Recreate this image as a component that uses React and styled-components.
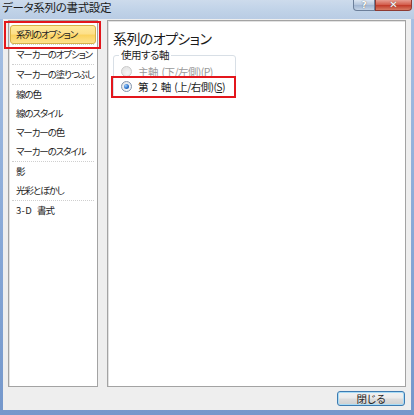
import React from 'react';
import styled, { createGlobalStyle } from 'styled-components';

const Global = createGlobalStyle`
  html, body { margin: 0; padding: 0; background: #fff; }
  body { font-family: "Noto Sans CJK JP", "Noto Sans", sans-serif; }
`;

const Window = styled.div`
  position: relative;
  width: 414px;
  height: 415px;
  display: flex;
  flex-direction: column;
  background: linear-gradient(180deg, #a9c2e4 0%, #86a7d6 60%, #7497cb 100%);
  font-family: "Noto Sans CJK JP", sans-serif;
  font-feature-settings: "palt" 1;
  color: #000;
  overflow: hidden;
`;

const TitleBar = styled.div`
  height: 19px;
  flex: none;
  display: flex;
  justify-content: space-between;
  align-items: flex-start;
  padding: 0 2px 0 2px;
  background: linear-gradient(180deg, #cddbec 0%, #c1d3e8 50%, #b9cce4 100%);
`;

const Title = styled.div`
  font-size: 11.5px;
  line-height: 15px;
  letter-spacing: -0.3px;
  color: #1a1a1a;
`;

const Controls = styled.div`
  display: flex;
`;

const CapButton = styled.div`
  height: 11px;
  width: ${p => p.$w}px;
  box-sizing: border-box;
  border: 1px solid ${p => (p.$close ? '#8e3a32' : '#6c7f9a')};
  border-top: none;
  border-radius: ${p => (p.$close ? '0 0 4px 0' : '0 0 0 4px')};
  background: ${p =>
    p.$close
      ? 'linear-gradient(180deg, #e79e92 0%, #d4604f 45%, #c23d2b 55%, #d77a62 100%)'
      : 'linear-gradient(180deg, #dbe5f1 0%, #b7c8de 45%, #a3b7d2 55%, #c3d3e6 100%)'};
  display: flex;
  align-items: center;
  justify-content: center;
  color: #fff;
  font-family: "DejaVu Sans", sans-serif;
  font-weight: bold;
  font-size: ${p => (p.$close ? 10 : 9)}px;
  line-height: 10px;
  text-shadow: 0 0 1px #444;
`;

const Client = styled.div`
  flex: 1;
  margin: 0 3px 5px 3px;
  background: #eeeeee;
  padding: 1px 5px 4px 5px;
  display: flex;
  flex-direction: column;
  min-height: 0;
`;

const Panels = styled.div`
  flex: 1;
  display: flex;
  gap: 9px;
  min-height: 0;
`;

const List = styled.div`
  width: 90px;
  box-sizing: border-box;
  border: 1px solid #a3a3a3;
  box-shadow: inset 1px 1px 0 #e2e2e2;
  background: #fff;
  padding: 4px 1px;
  display: flex;
  flex-direction: column;
`;

const Item = styled.div`
  height: 19px;
  line-height: 19px;
  box-sizing: border-box;
  padding-left: ${p => (p.$selected ? 5 : 6)}px;
  font-size: 9.5px;
  letter-spacing: -1.1px;
  word-spacing: 4px;
  white-space: nowrap;
  color: #1e1e1e;
  border-radius: 3px;
  ${p =>
    p.$selected &&
    `
    border: 1px solid #d6b149;
    line-height: 17px;
    background: linear-gradient(180deg, #ffeb9d 0%, #fde08a 45%, #fbd35f 55%, #fde28d 100%);
  `}
`;

const Latin = styled.span`
  letter-spacing: 0.3px;
`;

const Separator = styled.div`
  height: 0;
  margin: 0 2px;
  border-top: 1px dotted #cfcfcf;
`;

const Panel = styled.div`
  flex: 1;
  box-sizing: border-box;
  border: 1px solid #a3a3a3;
  box-shadow: inset 1px 1px 0 #e2e2e2;
  background: #fff;
  padding: 9px 5px;
  display: flex;
  flex-direction: column;
  align-items: flex-start;
`;

const Heading = styled.div`
  font-size: 14px;
  line-height: 16px;
  letter-spacing: -0.6px;
  color: #1a1a1a;
`;

const Group = styled.fieldset`
  margin: 3px 0 0 0;
  width: 123px;
  box-sizing: border-box;
  border: 1px solid #d8dfe6;
  border-radius: 3px;
  padding: 3px 0 3px 7px;
  display: flex;
  flex-direction: column;
`;

const Legend = styled.legend`
  padding: 0 2px;
  margin-left: -2px;
  font-size: 10.5px;
  line-height: 12px;
  letter-spacing: -0.5px;
  color: #1e1e1e;
`;

const Option = styled.label`
  height: 15px;
  display: flex;
  align-items: center;
  gap: 6px;
  font-size: 10.5px;
  letter-spacing: -0.6px;
  word-spacing: 2px;
  white-space: nowrap;
  color: ${p => (p.$disabled ? '#9a9a9a' : '#1e1e1e')};
`;

const Radio = styled.span`
  width: 11px;
  height: 11px;
  box-sizing: border-box;
  border-radius: 50%;
  flex: none;
  border: 1px solid ${p => (p.$disabled ? '#cacaca' : '#8596ad')};
  background: ${p =>
    p.$disabled
      ? 'radial-gradient(circle at 60% 65%, #f6f6f6 0%, #dedede 100%)'
      : 'radial-gradient(circle at 60% 65%, #ffffff 0%, #d8dde4 100%)'};
  display: flex;
  align-items: center;
  justify-content: center;
  &::after {
    content: '';
    display: ${p => (p.$checked ? 'block' : 'none')};
    width: 5px;
    height: 5px;
    border-radius: 50%;
    background: radial-gradient(circle at 35% 35%, #9fd0ff 0%, #2d72c9 55%, #1a4f9c 100%);
  }
`;

const Key = styled.span`
  text-decoration: underline;
  text-underline-offset: 1px;
`;

const Footer = styled.div`
  flex: none;
  display: flex;
  justify-content: flex-end;
  padding-top: 4px;
  padding-right: 1px;
`;

const Button = styled.div`
  width: 68px;
  height: 15px;
  box-sizing: border-box;
  border: 1px solid #3d7bb1;
  border-radius: 3px;
  box-shadow: inset 0 0 0 1px #a9dcf6;
  background: linear-gradient(180deg, #f2f2f2 0%, #ebebeb 45%, #dddddd 55%, #cfcfcf 100%);
  display: flex;
  align-items: center;
  justify-content: center;
  font-size: 10.5px;
  line-height: 13px;
  color: #1e1e1e;
`;

const Mark = styled.div`
  position: absolute;
  left: ${p => p.$x}px;
  top: ${p => p.$y}px;
  width: ${p => p.$w}px;
  height: ${p => p.$h}px;
  box-sizing: border-box;
  border: 2px solid #e3161c;
  pointer-events: none;
`;

const items = [
  { label: '系列のオプション', selected: true, sep: true },
  { label: 'マーカーのオプション', sep: true },
  { label: 'マーカーの塗りつぶし', sep: true },
  { label: '線の色' },
  { label: '線のスタイル' },
  { label: 'マーカーの色' },
  { label: 'マーカーのスタイル', sep: true },
  { label: '影' },
  { label: '光彩とぼかし', sep: true },
  { label: <><Latin>3-D</Latin> 書式</>, key: '3d' },
];

export default function App() {
  return (
    <>
      <Global />
      <Window>
        <TitleBar>
          <Title>データ系列の書式設定</Title>
          <Controls>
            <CapButton $w={22}>?</CapButton>
            <CapButton $w={37} $close>✕</CapButton>
          </Controls>
        </TitleBar>
        <Client>
          <Panels>
            <List>
              {items.map(it => (
                <React.Fragment key={it.key || it.label}>
                  <Item $selected={it.selected}>{it.label}</Item>
                  {it.sep && <Separator />}
                </React.Fragment>
              ))}
            </List>
            <Panel>
              <Heading>系列のオプション</Heading>
              <Group>
                <Legend>使用する軸</Legend>
                <Option $disabled>
                  <Radio $disabled />
                  <span>主軸 (下/左側)(<Key>P</Key>)</span>
                </Option>
                <Option>
                  <Radio $checked />
                  <span>第 2 軸 (上/右側)(<Key>S</Key>)</span>
                </Option>
              </Group>
            </Panel>
          </Panels>
          <Footer>
            <Button>閉じる</Button>
          </Footer>
        </Client>
        <Mark $x={4} $y={21} $w={97} $h={28} />
        <Mark $x={111} $y={76} $w={125} $h={22} />
      </Window>
    </>
  );
}
